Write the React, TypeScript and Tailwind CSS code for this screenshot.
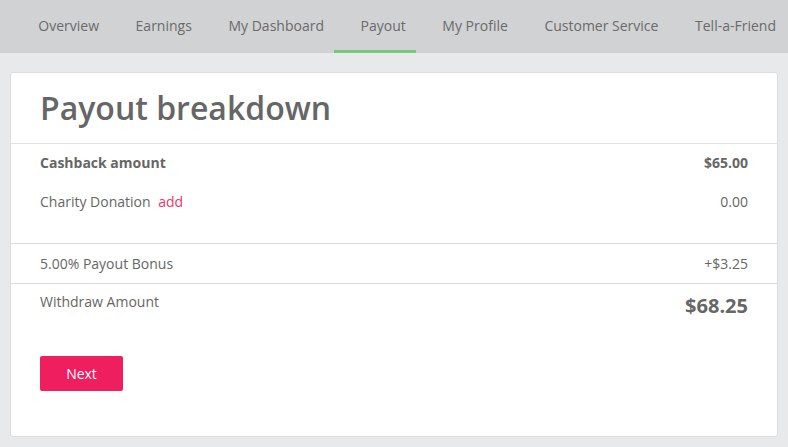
const tabs = ['Overview', 'Earnings', 'My Dashboard', 'Payout', 'My Profile', 'Customer Service', 'Tell-a-Friend']

function NavBar({ active }: { active: string }) {
  return (
    <nav className="flex h-[53px] items-stretch overflow-hidden whitespace-nowrap bg-[#d1d2d4] pl-[20px]">
      {tabs.map((tab) => (
        <div key={tab} className="relative flex items-center px-[18.3px] pb-[3px] text-[14px] text-[#6a6a6a]">
          {tab}
          {tab === active && <div className="absolute bottom-0 left-[-8px] right-[8px] h-[3px] bg-[#7ac67b]" />}
        </div>
      ))}
    </nav>
  )
}

export default function App() {
  return (
    <div className="min-h-[447px] bg-[#e8e9eb] font-['Open_Sans',sans-serif] text-[#666]">
      <NavBar active="Payout" />
      <div className="px-[10px] pt-[19px] pb-[9px]">
        <div className="rounded-[3px] border border-[#dcdddf] bg-white">
          <h1 className="border-b border-[#e1e1e1] px-[29px] py-[15px] text-[32px] leading-[40px] font-semibold text-[#666]">
            Payout breakdown
          </h1>

          <div className="flex flex-col gap-[19px] border-b border-[#dcdcdc] px-[29px] pt-[9px] pb-[31px] text-[14px] leading-[20px]">
            <div className="flex justify-between font-bold">
              <span>Cashback amount</span>
              <span>$65.00</span>
            </div>
            <div className="flex justify-between">
              <span>
                Charity Donation <span className="ml-[4px] text-[#ec3668]">add</span>
              </span>
              <span>0.00</span>
            </div>
          </div>

          <div className="flex justify-between border-b border-[#dcdcdc] px-[29px] pt-[10px] pb-[9px] text-[14px] leading-[20px]">
            <span>5.00% Payout Bonus</span>
            <span>+$3.25</span>
          </div>

          <div className="px-[29px] pt-[8px] pb-[45px]">
            <div className="flex items-start justify-between">
              <span className="text-[14px] leading-[20px]">Withdraw Amount</span>
              <span className="text-[20px] leading-[28px] font-bold">$68.25</span>
            </div>
            <button className="mt-[36px] h-[35px] w-[83px] rounded-[2px] bg-[#ef1e5f] text-[14px] text-white">
              Next
            </button>
          </div>
        </div>
      </div>
    </div>
  )
}
